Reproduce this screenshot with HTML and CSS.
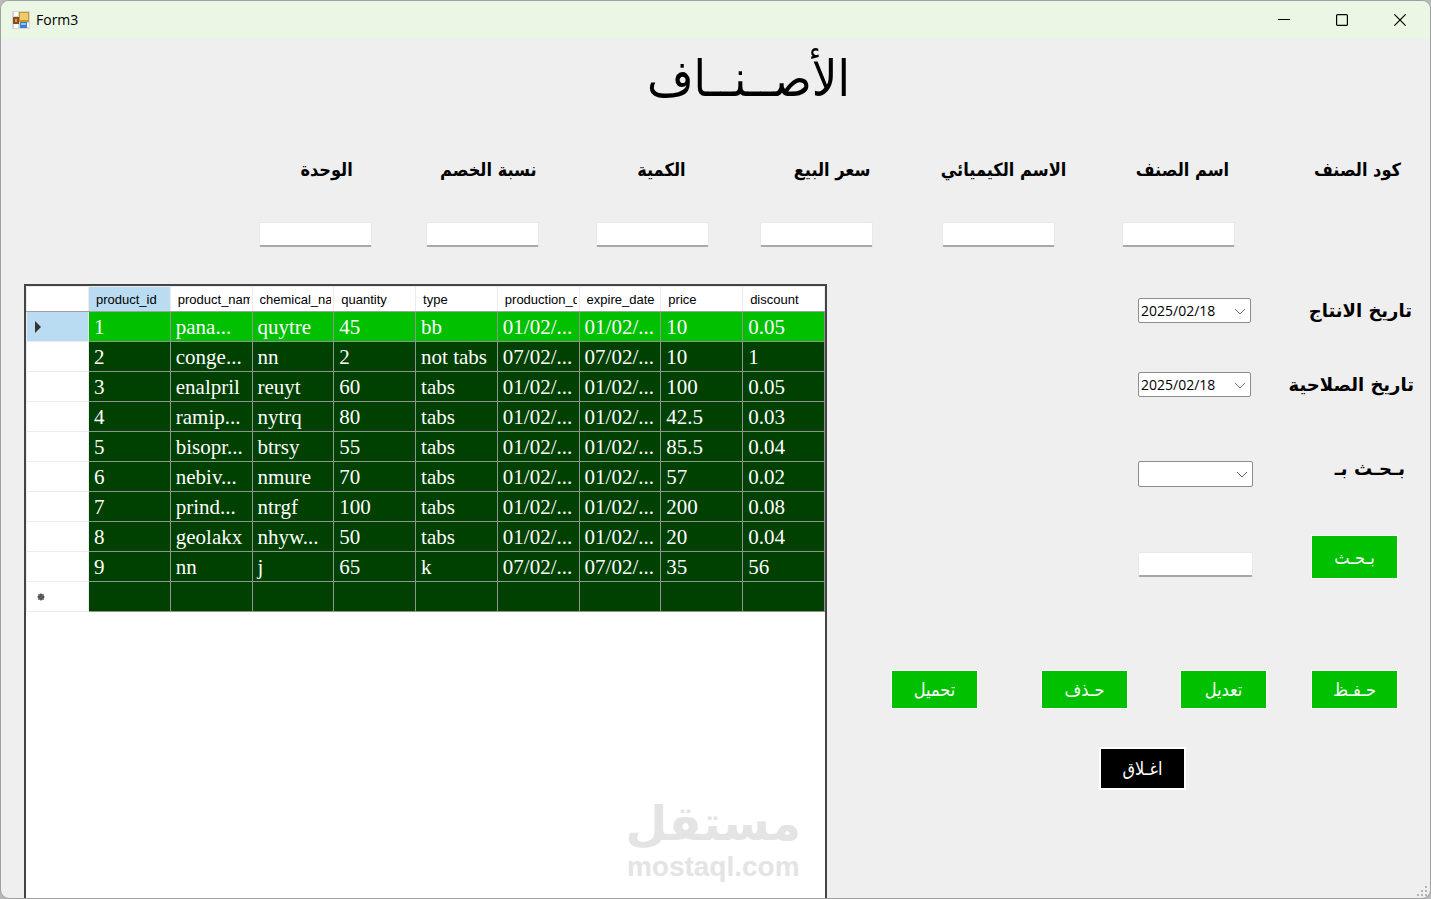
FILE: index.html
```
<!DOCTYPE html>
<html lang="ar">
<head>
    <meta charset="UTF-8">
    <meta name="viewport" content="width=device-width, initial-scale=1.0">
    <title>Form3</title>
    <link rel="stylesheet" href="styles.css">
</head>
<body>

    <div class="window">
        <header class="titlebar">
            <svg class="app-icon" width="18" height="18" viewBox="0 0 18 18">
                <rect width="18" height="18" fill="#d5d8d2"/>
                <rect x="2" y="1" width="4" height="4" fill="#fff"/>
                <rect x="2" y="13" width="4" height="4" fill="#fff"/>
                <rect x="15" y="12" width="2" height="4" fill="#fff"/>
                <rect x="1" y="6" width="6" height="7" fill="#8a4b20"/>
                <rect x="3" y="8" width="2" height="3" fill="#d89a60"/>
                <rect x="7" y="1" width="10" height="10" fill="#c8962c"/>
                <rect x="8" y="2" width="8" height="7" fill="#f0cc68"/>
                <rect x="8" y="11" width="7" height="6" fill="#3f7fc4"/>
                <rect x="9" y="12" width="5" height="2" fill="#8cc0ee"/>
            </svg>
            <span class="caption">Form3</span>
            <button class="win-button" aria-label="Minimize">
                <svg width="12" height="12" viewBox="0 0 12 12"><path d="M0 5.5h12" stroke="#000"/></svg>
            </button>
            <button class="win-button" aria-label="Maximize">
                <svg width="12" height="12" viewBox="0 0 12 12"><rect x=".6" y=".6" width="10.8" height="10.8" rx="1" fill="none" stroke="#000" stroke-width="1.2"/></svg>
            </button>
            <button class="win-button" aria-label="Close">
                <svg width="12" height="12" viewBox="0 0 12 12"><path d="M.4 .4l11.2 11.2M11.6 .4L.4 11.6" stroke="#000" stroke-width="1.2"/></svg>
            </button>
        </header>

        <main class="form" dir="rtl">
            <h1>الأصــنــاف</h1>

            <div class="labels">
                <span>كود الصنف</span>
                <label for="name">اسم الصنف</label>
                <label for="chemical">الاسم الكيميائي</label>
                <label for="price">سعر البيع</label>
                <label for="quantity">الكمية</label>
                <label for="discount">نسبة الخصم</label>
                <label for="unit">الوحدة</label>
            </div>
            <div class="inputs">
                <span></span>
                <input type="text" id="name" class="textbox">
                <input type="text" id="chemical" class="textbox">
                <input type="text" id="price" class="textbox">
                <input type="text" id="quantity" class="textbox">
                <input type="text" id="discount" class="textbox">
                <input type="text" id="unit" class="textbox">
            </div>

            <div class="content">
                <section class="side">
                    <div class="row">
                        <label for="production">تاريخ الانتاج</label>
                        <div class="picker" dir="ltr">
                            <input type="text" id="production" value="2025/02/18">
                            <svg width="12" height="7" viewBox="0 0 12 7"><path d="M1 1l5 5 5-5" fill="none" stroke="#777"/></svg>
                        </div>
                    </div>
                    <div class="row expire-row">
                        <label for="expire">تاريخ الصلاحية</label>
                        <div class="picker" dir="ltr">
                            <input type="text" id="expire" value="2025/02/18">
                            <svg width="12" height="7" viewBox="0 0 12 7"><path d="M1 1l5 5 5-5" fill="none" stroke="#777"/></svg>
                        </div>
                    </div>
                    <div class="row search-row">
                        <label for="search-by">بـحـث بـ</label>
                        <div class="combo" dir="ltr">
                            <select id="search-by">
                                <option></option>
                            </select>
                            <svg width="12" height="7" viewBox="0 0 12 7"><path d="M1 1l5 5 5-5" fill="none" stroke="#666"/></svg>
                        </div>
                    </div>
                    <div class="row find-row">
                        <button class="button find">بـحـث</button>
                        <input type="text" class="textbox" aria-label="بحث">
                    </div>

                    <div class="actions">
                        <button class="button">حـفـظ</button>
                        <button class="button">تعديل</button>
                        <button class="button">حـذف</button>
                        <button class="button">تحميل</button>
                    </div>
                    <button class="button close">اغـلاق</button>
                </section>

                <section class="data-grid" dir="ltr">
                    <table>
                        <thead>
                            <tr>
                                <th class="corner"></th>
                                <th class="current"><div>product_id</div></th>
                                <th><div>product_name</div></th>
                                <th><div>chemical_name</div></th>
                                <th><div>quantity</div></th>
                                <th><div>type</div></th>
                                <th><div>production_date</div></th>
                                <th><div>expire_date</div></th>
                                <th><div>price</div></th>
                                <th><div>discount</div></th>
                            </tr>
                        </thead>
                        <tbody>
                            <tr class="selected">
                                <th><svg width="8" height="12" viewBox="0 0 8 12"><path d="M1 0l6 6-6 6z" fill="#333"/></svg></th>
                                <td>1</td><td>pana...</td><td>quytre</td><td>45</td><td>bb</td><td>01/02/...</td><td>01/02/...</td><td>10</td><td>0.05</td>
                            </tr>
                            <tr>
                                <th></th>
                                <td>2</td><td>conge...</td><td>nn</td><td>2</td><td>not tabs</td><td>07/02/...</td><td>07/02/...</td><td>10</td><td>1</td>
                            </tr>
                            <tr>
                                <th></th>
                                <td>3</td><td>enalpril</td><td>reuyt</td><td>60</td><td>tabs</td><td>01/02/...</td><td>01/02/...</td><td>100</td><td>0.05</td>
                            </tr>
                            <tr>
                                <th></th>
                                <td>4</td><td>ramip...</td><td>nytrq</td><td>80</td><td>tabs</td><td>01/02/...</td><td>01/02/...</td><td>42.5</td><td>0.03</td>
                            </tr>
                            <tr>
                                <th></th>
                                <td>5</td><td>bisopr...</td><td>btrsy</td><td>55</td><td>tabs</td><td>01/02/...</td><td>01/02/...</td><td>85.5</td><td>0.04</td>
                            </tr>
                            <tr>
                                <th></th>
                                <td>6</td><td>nebiv...</td><td>nmure</td><td>70</td><td>tabs</td><td>01/02/...</td><td>01/02/...</td><td>57</td><td>0.02</td>
                            </tr>
                            <tr>
                                <th></th>
                                <td>7</td><td>prind...</td><td>ntrgf</td><td>100</td><td>tabs</td><td>01/02/...</td><td>01/02/...</td><td>200</td><td>0.08</td>
                            </tr>
                            <tr>
                                <th></th>
                                <td>8</td><td>geolakx</td><td>nhyw...</td><td>50</td><td>tabs</td><td>01/02/...</td><td>01/02/...</td><td>20</td><td>0.04</td>
                            </tr>
                            <tr>
                                <th></th>
                                <td>9</td><td>nn</td><td>j</td><td>65</td><td>k</td><td>07/02/...</td><td>07/02/...</td><td>35</td><td>56</td>
                            </tr>
                            <tr>
                                <th><svg class="new-row" width="8" height="8" viewBox="0 0 8 8"><circle cx="4" cy="4" r="3" fill="#444"/><path d="M4 0v8M0 4h8M1 1l6 6M7 1L1 7" stroke="#666" stroke-width=".8"/></svg></th>
                                <td></td><td></td><td></td><td></td><td></td><td></td><td></td><td></td><td></td>
                            </tr>
                        </tbody>
                    </table>
                    <div class="watermark">
                        <span class="brand">مستقل</span>
                        <span class="domain">mostaql.com</span>
                    </div>
                </section>
            </div>
        </main>

        <svg class="grip" width="10" height="10" viewBox="0 0 10 10" fill="#b4b4b4">
            <rect x="8" y="0" width="2" height="2"/>
            <rect x="4" y="4" width="2" height="2"/><rect x="8" y="4" width="2" height="2"/>
            <rect x="0" y="8" width="2" height="2"/><rect x="4" y="8" width="2" height="2"/><rect x="8" y="8" width="2" height="2"/>
        </svg>
    </div>

</body>
</html>
```
FILE: styles.css
```
* {
    margin: 0;
    padding: 0;
    box-sizing: border-box;
}
body {
    font-family: 'DejaVu Sans', sans-serif;
    background-color: #b8b8ba;
    color: #000;
}
.window {
    position: relative;
    display: flex;
    flex-direction: column;
    height: 100vh;
    background-color: #efefef;
    border: 1px solid #a0a0a0;
    border-radius: 9px;
    overflow: hidden;
}
.titlebar {
    display: flex;
    align-items: center;
    height: 38px;
    padding-right: 1px;
    padding-left: 11px;
    background-color: #ebf7e5;
    flex-shrink: 0;
}
.caption {
    flex: 1;
    padding-left: 6px;
    font-family: 'Open Sans', sans-serif;
    font-size: 14px;
    line-height: 18px;
}
.win-button {
    display: flex;
    justify-content: center;
    align-items: center;
    width: 58px;
    height: 38px;
    border: none;
    background: none;
}
.form {
    display: flex;
    flex-direction: column;
    flex: 1;
    min-height: 0;
}
h1 {
    height: 80px;
    padding-left: 66px;
    font-family: 'DejaVu Sans Condensed', 'DejaVu Sans', sans-serif;
    font-size: 50px;
    font-weight: normal;
    line-height: 80px;
    text-align: center;
}
.labels,
.inputs {
    display: grid;
    padding-right: 29px;
}
.labels {
    grid-template-columns: 172fr 163fr 196fr 185fr 149fr 184fr 352fr;
    margin-top: 36px;
    font-family: 'DejaVu Sans Condensed', 'DejaVu Sans', sans-serif;
    line-height: 30px;
}
.inputs {
    grid-template-columns: 166fr 180fr 182fr 165fr 170fr 167fr 371fr;
    margin-top: 37px;
}
.labels,
.row label {
    font-size: 18px;
    font-weight: bold;
}
.textbox {
    width: 113px;
    height: 25px;
    padding: 0 4px;
    background-color: #fff;
    border: 1px solid #e8e8e8;
    border-bottom: 2px solid #a8a8a8;
    border-radius: 2px;
    font-size: 14px;
}
.content {
    display: grid;
    grid-template-columns: 603fr 803fr;
    flex: 1;
    margin-top: 37px;
    padding-left: 23px;
    min-height: 0;
}
.side {
    display: flex;
    flex-direction: column;
    padding-top: 14px;
}
.row {
    display: flex;
    justify-content: space-between;
    align-items: center;
    padding-right: 18px;
    padding-left: 311px;
}
.row label {
    line-height: 25px;
}
.expire-row {
    margin-top: 49px;
    padding-right: 16px;
}
.search-row {
    align-items: flex-start;
    margin-top: 59px;
    padding-right: 25px;
}
.find-row {
    align-items: flex-end;
    margin-top: 48px;
    padding-right: 32px;
}
.picker,
.combo {
    position: relative;
    width: 113px;
    height: 25px;
}
.combo {
    width: 115px;
    height: 26px;
    margin-top: 5px;
}
.picker input,
.combo select {
    width: 100%;
    height: 100%;
    padding: 0 2px;
    appearance: none;
    background-color: #fff;
    border: 1px solid #8c8c8c;
    border-radius: 2px;
    font-family: 'Open Sans', sans-serif;
    font-size: 14px;
}
.picker svg,
.combo svg {
    position: absolute;
    top: 10px;
    right: 5px;
    pointer-events: none;
}
.button {
    width: 87px;
    height: 39px;
    background-color: #00c000;
    border: 1px solid #fff;
    color: #fff;
    font-family: 'DejaVu Sans Condensed', 'DejaVu Sans', sans-serif;
    font-size: 18px;
}
.button.find {
    height: 44px;
}
.find-row .textbox {
    width: 115px;
    margin-bottom: 2px;
}
.actions {
    display: grid;
    grid-template-columns: 131px 139px 150px 87px;
    margin-top: 91px;
    padding-right: 32px;
}
.button.close {
    align-self: center;
    width: 87px;
    height: 43px;
    margin-top: 38px;
    margin-left: 0;
    margin-right: -28px;
    background-color: #000;
    border-width: 2px;
}
.data-grid {
    position: relative;
    background-color: #fff;
    border: 2px solid #444;
    border-bottom: none;
    overflow: hidden;
}
table {
    width: 100%;
    table-layout: fixed;
    border-collapse: collapse;
}
th {
    height: 30px;
    padding-right: 2px;
    padding-left: 7px;
    border: 1px solid #ececec;
    font-weight: normal;
    text-align: left;
    white-space: nowrap;
}
th div {
    overflow: hidden;
}
thead th {
    height: 25px;
    font-family: 'Liberation Sans', sans-serif;
    font-size: 13px;
    border-bottom-color: #a0a0a0;
}
th.corner {
    width: 62px;
}
th svg {
    display: block;
}
th .new-row {
    margin-left: 3px;
}
th.current,
.selected th {
    background-color: #b9dcf2;
}
td {
    height: 30px;
    padding-left: 5px;
    background-color: #004000;
    border: 1px solid #8c968c;
    color: #fff;
    font-family: 'Liberation Serif', serif;
    font-size: 21px;
    line-height: 24px;
    white-space: nowrap;
    overflow: hidden;
}
.selected td {
    background-color: #00c000;
}
.watermark {
    position: absolute;
    right: 24px;
    bottom: 14px;
    display: flex;
    flex-direction: column;
    align-items: center;
    color: #e4e4e4;
    font-weight: bold;
}
.brand {
    font-size: 48px;
    line-height: 54px;
}
.domain {
    font-family: 'Liberation Sans', sans-serif;
    font-size: 28px;
    line-height: 34px;
}
.grip {
    position: absolute;
    right: 3px;
    bottom: 2px;
}
```
